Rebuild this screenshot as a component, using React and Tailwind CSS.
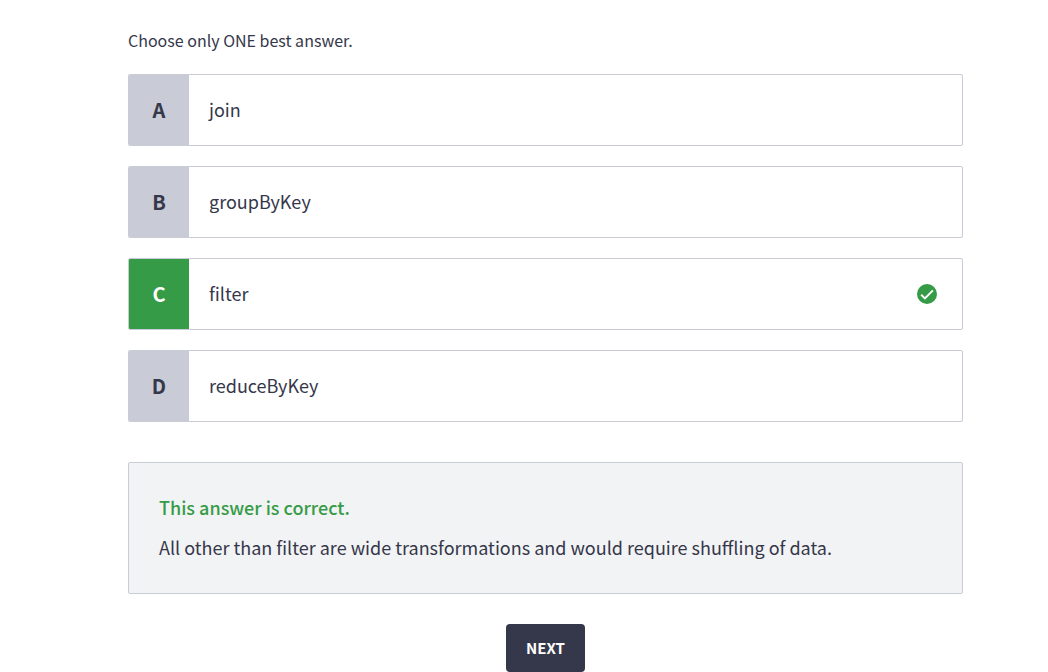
import React from "react";

const options = [
  { letter: "A", text: "join" },
  { letter: "B", text: "groupByKey" },
  { letter: "C", text: "filter", correct: true },
  { letter: "D", text: "reduceByKey" },
];

function CheckBadge() {
  return (
    <svg className="size-5 shrink-0" viewBox="0 0 20 20" role="img" aria-label="Correct">
      <circle cx="10" cy="10" r="10" fill="#369b47" />
      <path d="M4.2 10.8 7.9 14.4 15.9 6.4" fill="none" stroke="#fff" strokeWidth="2" />
    </svg>
  );
}

function Option({ letter, text, correct }) {
  return (
    <button
      type="button"
      className="flex h-18 w-full items-stretch overflow-hidden rounded-xs border border-[#c9cbd6] bg-white text-left"
    >
      <span
        className={
          correct
            ? "flex w-15 shrink-0 items-center justify-center bg-[#369b47] text-xl font-bold text-white"
            : "flex w-15 shrink-0 items-center justify-center bg-[#c9cbd6] text-xl font-bold text-[#35374a]"
        }
      >
        {letter}
      </span>
      <span className="flex grow items-center justify-between pl-5 pr-[25px] text-lg">
        <span className="pb-0.5">{text}</span>
        {correct && <CheckBadge />}
      </span>
    </button>
  );
}

export default function App() {
  return (
    <main className="bg-white pl-32 pr-[85px] pt-7 font-['Noto_Sans_CJK_SC',sans-serif] text-[#35374a]">
      <p className="text-base">Choose only ONE best answer.</p>
      <div className="mt-[22px] flex flex-col gap-5">
        {options.map((option) => (
          <Option key={option.letter} {...option} />
        ))}
      </div>
      <section className="mt-10 rounded-xs border border-[#c9cbd6] bg-[#f2f3f5] px-[30px] pt-[29px] pb-[31px] text-lg">
        <h2 className="leading-[30px] font-medium text-[#369b47]">This answer is correct.</h2>
        <p className="mt-[10px] leading-[30px]">
          All other than filter are wide transformations and would require shuffling of data.
        </p>
      </section>
      <div className="mt-[30px] flex justify-center">
        <button type="button" className="h-12 rounded-sm bg-[#35374a] px-5 text-[15px] font-bold text-white">
          NEXT
        </button>
      </div>
    </main>
  );
}
